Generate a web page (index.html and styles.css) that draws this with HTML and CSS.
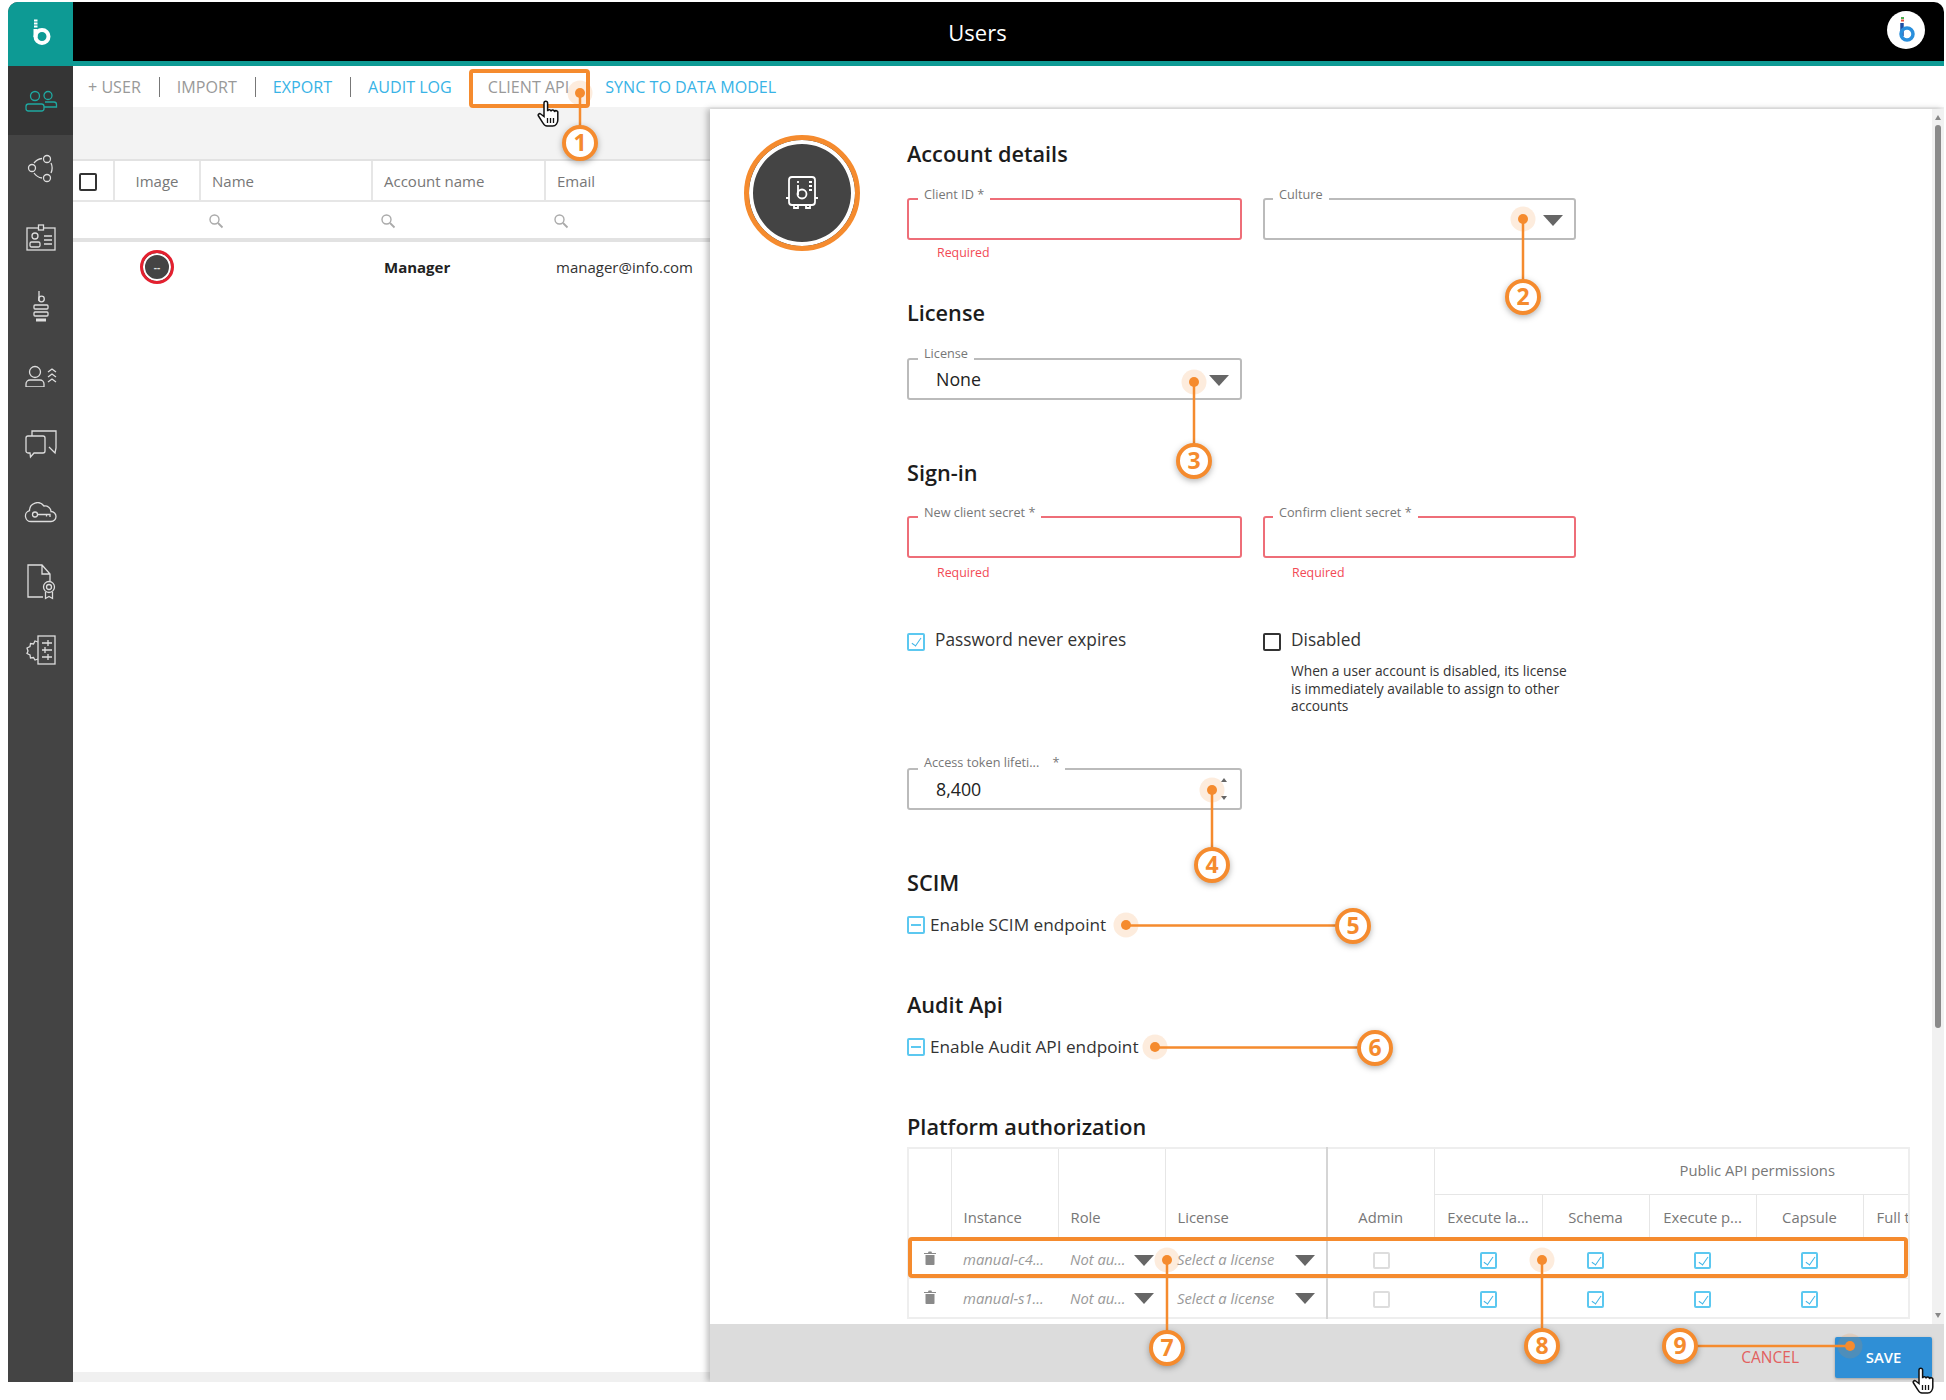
FILE: index.html
```html
<!DOCTYPE html>
<html lang="en">
<head>
  <meta charset="UTF-8" />
  <meta name="viewport" content="width=device-width, initial-scale=1" />
  <title>Users</title>
  <link rel="stylesheet" href="styles.css">
</head>
<body>

<svg class="defs" width="0" height="0">
  <symbol id="search" viewBox="0 0 16 16">
    <circle cx="6.5" cy="6.5" r="4.5" fill="none" stroke="#aaa" stroke-width="1.4"/>
    <path d="M10 10l4.5 4.5" stroke="#aaa" stroke-width="1.8"/>
  </symbol>
  <symbol id="trash" viewBox="0 0 12 14">
    <path d="M1.5 4h9v9.2a.8.8 0 0 1-.8.8H2.300a.8.8 0 0 1-.8-.8zM0 2h4l.6-1.500h2.800L8 2h4v1H0z" fill="#8a8a8a"/>
  </symbol>
  <symbol id="hand" viewBox="0 0 24 28">
    <path d="M7 3a1.800 1.800 0 0 1 3.600 0v8.200a1.700 1.700 0 0 1 3.400.3 1.700 1.700 0 0 1 3.400.5 1.700 1.700 0 0 1 3.400.8V20c0 3-2 6-5 6H10c-2 0-3-1-4-3L1.500 16c-1-1.500.8-3 2.200-2L7 16.500Z" fill="#fff" stroke="#111" stroke-width="1.500"/>
    <path d="M10.500 18v5M13.500 18v5M16.500 18v5" stroke="#111" stroke-width="1.300"/>
  </symbol>
</svg>

<div class="app">
  <nav class="sidenav">
    <div class="logo">
      <svg width="22" height="30" viewBox="0 0 22 30" fill="none" stroke="#fff">
        <path d="M4 1.500h3.500M4 4.500h3.500M4 7.500h3.500" stroke-width="2"/>
        <path d="M5.500 10v8" stroke-width="4"/>
        <circle cx="12" cy="17.500" r="6.500" stroke-width="4"/>
      </svg>
    </div>
    <a class="nav-item nav-active">
      <svg width="36" height="24" viewBox="0 -2 36 24" fill="none" stroke="#1fa8a0" stroke-width="1.500">
        <circle cx="12" cy="6" r="4.500"/><circle cx="25" cy="5.500" r="4"/>
        <rect x="3" y="14" width="18" height="7" rx="2.500"/>
        <path d="M22 12h9a2.500 2.500 0 0 1 2.500 2.500V17H21"/>
      </svg>
    </a>
    <a class="nav-item">
      <svg width="32" height="32" viewBox="0 0 32 32" fill="none" stroke="#ddd" stroke-width="1.500">
        <circle cx="22" cy="6" r="3.500"/><circle cx="7" cy="15" r="3.500"/><circle cx="22" cy="25" r="3.500"/>
        <path d="M9 10a12 12 0 0 1 8-4.500M26 10a12 12 0 0 1 0 10M9 20a12 12 0 0 0 8 5"/>
      </svg>
    </a>
    <a class="nav-item">
      <svg width="32" height="32" viewBox="0 0 32 32" fill="none" stroke="#ddd" stroke-width="1.500">
        <rect x="2" y="6" width="28" height="22"/>
        <rect x="13.500" y="3" width="5" height="5" fill="#444"/>
        <circle cx="10" cy="14" r="3"/><rect x="5" y="20" width="10" height="5" rx="1.500"/>
        <path d="M19 14h8M19 18h8M19 22h8"/>
      </svg>
    </a>
    <a class="nav-item">
      <svg width="24" height="34" viewBox="0 0 24 34" fill="none" stroke="#ddd" stroke-width="1.500">
        <path d="M10 1v10" /><circle cx="12.500" cy="9" r="2.800"/>
        <rect x="5" y="15" width="14" height="4" rx="1"/>
        <rect x="5" y="22" width="14" height="4" rx="1"/>
        <path d="M7 30h10" stroke-width="3"/>
      </svg>
    </a>
    <a class="nav-item">
      <svg width="32" height="24" viewBox="0 -2 32 24" fill="none" stroke="#ddd" stroke-width="1.500">
        <circle cx="10" cy="7" r="5.500"/>
        <path d="M1 22v-3a4 4 0 0 1 4-4h10a4 4 0 0 1 4 4v3z"/>
        <path d="M23 7l4-3 4 3M23 12l4-3 4 3M23 17l4-3 4 3"/>
      </svg>
    </a>
    <a class="nav-item">
      <svg width="32" height="30" viewBox="0 0 32 30" fill="none" stroke="#ddd" stroke-width="1.500">
        <path d="M7 7V2h24v17l-1 5-6-6"/>
        <path d="M1 9a2 2 0 0 1 2-2h15a2 2 0 0 1 2 2v13a2 2 0 0 1-2 2H9l-3.500 4-.5-4H3a2 2 0 0 1-2-2z"/>
      </svg>
    </a>
    <a class="nav-item">
      <svg width="34" height="22" viewBox="0 1.500 34 22" fill="none" stroke="#ddd" stroke-width="1.500">
        <path d="M7 21a5.500 5.500 0 0 1-1.500-10.800A8 8 0 0 1 20 5.500a6 6 0 0 1 7 5.500 5 5 0 0 1 0 10z"/>
        <circle cx="11" cy="14" r="2.500"/>
        <path d="M13.500 14H26v2.500M22.500 14v2"/>
      </svg>
    </a>
    <a class="nav-item">
      <svg width="30" height="36" viewBox="0 0 30 36" fill="none" stroke="#ddd" stroke-width="1.500">
        <path d="M17 33H2V1h14l8 9v7M16 1v9h8"/>
        <circle cx="23" cy="23" r="5.500"/><circle cx="23" cy="23" r="2.500"/>
        <path d="M19.500 28v6.500l3.500-2 3.500 2V28"/>
      </svg>
    </a>
    <a class="nav-item">
      <svg width="32" height="32" viewBox="0 0 32 32" fill="none" stroke="#ddd" stroke-width="1.500">
        <rect x="13" y="2" width="17" height="28"/>
        <path d="M13 8l-3-1-1.500 3-3-.5-.5 3-3 1.500 1 3-1 2.500 3 1.500.5 3 3-.5 1.500 2.500 3-1"/>
        <path d="M17 9h10M23 6v6M17 16h10M20 13v6M17 23h10M23 20v6"/>
      </svg>
    </a>
  </nav>

  <div class="main">
    <header class="topbar">
      <h1>Users</h1>
      <div class="user-badge">
        <svg width="20" height="26" viewBox="0 0 20 26" fill="none">
          <path d="M5 1h3" stroke="#4caf50" stroke-width="2"/>
          <path d="M5 3.500h3" stroke="#e5533d" stroke-width="2"/>
          <path d="M6 6v13" stroke="#1f4fa3" stroke-width="3.500"/>
          <circle cx="11" cy="17" r="6" stroke="#2a8fdc" stroke-width="3.500"/>
        </svg>
      </div>
    </header>

    <div class="toolbar">
      <a class="tool tool-off tool-sep">+ USER</a>
      <a class="tool tool-off tool-sep">IMPORT</a>
      <a class="tool tool-sep">EXPORT</a>
      <a class="tool">AUDIT LOG</a>
      <a class="tool tool-off tool-api">CLIENT API</a>
      <a class="tool">SYNC TO DATA MODEL</a>
    </div>

    <div class="content">
      <section class="list">
        <div class="list-band"></div>
        <table class="user-table">
          <colgroup>
            <col class="c-check"><col class="c-image"><col class="c-name"><col class="c-account"><col class="c-email">
          </colgroup>
          <tr class="head-row">
            <th><span class="cb cb-plain"></span></th>
            <th class="centered">Image</th>
            <th>Name</th>
            <th>Account name</th>
            <th>Email</th>
          </tr>
          <tr class="filter-row">
            <td></td>
            <td></td>
            <td><svg class="search" width="16" height="16"><use href="#search"/></svg></td>
            <td><svg class="search" width="16" height="16"><use href="#search"/></svg></td>
            <td><svg class="search" width="16" height="16"><use href="#search"/></svg></td>
          </tr>
          <tr class="user-row">
            <td></td>
            <td class="centered"><span class="user-pic">--</span></td>
            <td></td>
            <td class="strong">Manager</td>
            <td class="mail">manager@info.com</td>
          </tr>
        </table>
        <div class="list-fill"></div>
        <div class="list-scroll"></div>
      </section>

      <section class="panel">
        <div class="panel-body">
          <div class="avatar-col">
            <div class="avatar">
              <svg width="38" height="38" viewBox="0 0 38 38" fill="none" stroke="#fff" stroke-width="1.800">
                <rect x="6" y="3" width="26" height="28" rx="3"/>
                <path d="M3 24h3M32 24h3M11 31v3h4v-3M23 31v3h4v-3M26 8h3M26 12h3M26 16h3"/>
                <path d="M15 7v2M15 11v10"/>
                <circle cx="19" cy="20" r="4.500"/>
              </svg>
            </div>
          </div>

          <div class="form">
            <h2>Account details</h2>
            <div class="row row-first">
              <div class="field field-wide field-error">
                <label>Client ID *</label>
                <p class="error">Required</p>
              </div>
              <div class="field field-narrow">
                <label>Culture</label>
                <i class="arrow"></i>
              </div>
            </div>

            <h2 class="h-license">License</h2>
            <div class="row row-license">
              <div class="field field-wide">
                <label>License</label>
                <span class="value">None</span>
                <i class="arrow"></i>
              </div>
            </div>

            <h2 class="h-signin">Sign-in</h2>
            <div class="row row-signin">
              <div class="field field-wide field-error">
                <label>New client secret *</label>
                <p class="error">Required</p>
              </div>
              <div class="field field-narrow field-error">
                <label>Confirm client secret *</label>
                <p class="error">Required</p>
              </div>
            </div>

            <div class="options">
              <div class="option option-left">
                <span class="cb cb-on"></span>
                <span class="option-label">Password never expires</span>
              </div>
              <div class="option-right">
                <div class="option">
                  <span class="cb cb-plain"></span>
                  <span class="option-label">Disabled</span>
                </div>
                <p class="hint">When a user account is disabled, its license is immediately available to assign to other accounts</p>
              </div>
            </div>

            <div class="row row-token">
              <div class="field field-wide">
                <label>Access token lifeti... &nbsp;&nbsp; *</label>
                <span class="value">8,400</span>
                <span class="spinner"><i class="spin-up"></i><i class="spin-down"></i></span>
              </div>
            </div>

            <h2 class="h-scim">SCIM</h2>
            <div class="check-row">
              <span class="cb cb-mixed"></span>
              <span>Enable SCIM endpoint</span>
            </div>

            <h2 class="h-audit">Audit Api</h2>
            <div class="check-row">
              <span class="cb cb-mixed"></span>
              <span>Enable Audit API endpoint</span>
            </div>

            <h2 class="h-platform">Platform authorization</h2>
            <table class="auth-table">
              <colgroup>
                <col class="a-del"><col class="a-col"><col class="a-col"><col class="a-lic"><col class="a-col">
                <col class="a-first"><col class="a-col"><col class="a-col"><col class="a-col"><col class="a-end">
              </colgroup>
              <tr class="auth-top">
                <th rowspan="2"></th>
                <th rowspan="2">Instance</th>
                <th rowspan="2">Role</th>
                <th rowspan="2" class="sep-right">License</th>
                <th rowspan="2" class="centered">Admin</th>
                <th colspan="5" class="centered group">Public API permissions</th>
              </tr>
              <tr class="auth-sub">
                <th class="centered">Execute la...</th>
                <th class="centered">Schema</th>
                <th class="centered">Execute p...</th>
                <th class="centered">Capsule</th>
                <th class="clip">Full text</th>
              </tr>
              <tr class="auth-row">
                <td class="centered"><svg width="12" height="14"><use href="#trash"/></svg></td>
                <td class="muted">manual-c4...</td>
                <td><div class="pick"><span class="muted">Not au...</span><i class="arrow"></i></div></td>
                <td class="sep-right"><div class="pick"><span class="muted">Select a license</span><i class="arrow"></i></div></td>
                <td class="centered"><span class="cb cb-off"></span></td>
                <td class="centered"><span class="cb cb-on"></span></td>
                <td class="centered"><span class="cb cb-on"></span></td>
                <td class="centered"><span class="cb cb-on"></span></td>
                <td class="centered"><span class="cb cb-on"></span></td>
                <td></td>
              </tr>
              <tr class="auth-row">
                <td class="centered"><svg width="12" height="14"><use href="#trash"/></svg></td>
                <td class="muted">manual-s1...</td>
                <td><div class="pick"><span class="muted">Not au...</span><i class="arrow"></i></div></td>
                <td class="sep-right"><div class="pick"><span class="muted">Select a license</span><i class="arrow"></i></div></td>
                <td class="centered"><span class="cb cb-off"></span></td>
                <td class="centered"><span class="cb cb-on"></span></td>
                <td class="centered"><span class="cb cb-on"></span></td>
                <td class="centered"><span class="cb cb-on"></span></td>
                <td class="centered"><span class="cb cb-on"></span></td>
                <td></td>
              </tr>
            </table>
          </div>

          <div class="scrollbar">
            <i class="scroll-up"></i>
            <div class="scroll-thumb"></div>
            <i class="scroll-down"></i>
          </div>
        </div>

        <footer class="panel-foot">
          <button class="btn-cancel">CANCEL</button>
          <button class="btn-save">SAVE</button>
        </footer>
      </section>
    </div>
  </div>
</div>

<!-- callouts drawn on top of the screenshot -->
<svg class="callouts" width="1946" height="1400" viewBox="0 0 1946 1400">
  <g class="frames">
    <rect x="471" y="71" width="117" height="35" rx="2"/>
    <rect x="910" y="1239" width="996" height="37" rx="2"/>
  </g>
  <g class="halos">
    <circle cx="580" cy="93" r="12.500"/>
    <circle cx="1523" cy="219" r="12.500"/>
    <circle cx="1194" cy="382" r="12.500"/>
    <circle cx="1212" cy="790" r="12.500"/>
    <circle cx="1126" cy="925" r="12.500"/>
    <circle cx="1155" cy="1047" r="12.500"/>
    <circle cx="1167" cy="1260" r="12.500"/>
    <circle cx="1542" cy="1260" r="12.500"/>
    <circle cx="1850" cy="1346" r="12.500"/>
  </g>
  <g class="leaders">
    <path d="M580 93V143M1523 219V297M1194 382V461M1212 790V865M1126 925.500H1353M1155 1047.500H1375M1167 1260V1348M1542 1260V1346M1850 1346H1680"/>
  </g>
  <g class="dots">
    <circle cx="580" cy="93" r="5"/>
    <circle cx="1523" cy="219" r="5"/>
    <circle cx="1194" cy="382" r="5"/>
    <circle cx="1212" cy="790" r="5"/>
    <circle cx="1126" cy="925" r="5"/>
    <circle cx="1155" cy="1047" r="5"/>
    <circle cx="1167" cy="1260" r="5"/>
    <circle cx="1542" cy="1260" r="5"/>
    <circle cx="1850" cy="1346" r="5"/>
  </g>
  <g class="marks">
    <circle cx="580" cy="143" r="16"/>
    <circle cx="1523" cy="297" r="16"/>
    <circle cx="1194" cy="461" r="16"/>
    <circle cx="1212" cy="865" r="16"/>
    <circle cx="1353" cy="926" r="16"/>
    <circle cx="1375" cy="1048" r="16"/>
    <circle cx="1167" cy="1348" r="16"/>
    <circle cx="1542" cy="1346" r="16"/>
    <circle cx="1680" cy="1346" r="16"/>
  </g>
  <g class="numbers">
    <text x="580" y="151">1</text>
    <text x="1523" y="305">2</text>
    <text x="1194" y="469">3</text>
    <text x="1212" y="873">4</text>
    <text x="1353" y="934">5</text>
    <text x="1375" y="1056">6</text>
    <text x="1167" y="1356">7</text>
    <text x="1542" y="1354">8</text>
    <text x="1680" y="1354">9</text>
  </g>
  <use href="#hand" x="537" y="100" width="24" height="28"/>
  <use href="#hand" x="1912" y="1367" width="24" height="28"/>
</svg>

</body>
</html>
```

FILE: styles.css
```css
* {
  box-sizing: border-box;
}
html, body {
  margin: 0;
  padding: 0;
  background: #fff;
}
body {
  position: relative;
  width: 1946px;
  height: 1400px;
  overflow: hidden;
  font-family: "Open Sans", "Noto Sans", sans-serif;
  color: #222;
}
.defs {
  position: absolute;
}
.app {
  display: flex;
  width: 1936px;
  height: 1380px;
  margin: 2px 2px 0 8px;
  border-radius: 10px 10px 0 0;
  overflow: hidden;
}

/* left nav */
.sidenav {
  width: 65px;
  background: #444;
  flex: none;
}
.logo {
  height: 64px;
  background: #0d9a94;
  display: flex;
  align-items: center;
  justify-content: center;
}
.nav-item {
  display: flex;
  align-items: center;
  justify-content: center;
  height: 68.750px;
}
.nav-item svg {
  stroke-width: 1.300;
}
.nav-active {
  background: #353535;
}

.main {
  flex: 1;
  display: flex;
  flex-direction: column;
  min-width: 0;
}
.topbar {
  height: 64px;
  flex: none;
  background: #000;
  border-bottom: 5px solid #0d9a94;
  position: relative;
  display: flex;
  align-items: center;
  justify-content: center;
  padding-right: 62px;
}
.topbar h1 {
  margin: 0;
  font-size: 22px;
  font-weight: 400;
  color: #fff;
}
.user-badge {
  position: absolute;
  right: 19px;
  top: 9px;
  width: 38px;
  height: 38px;
  border-radius: 50%;
  background: #fff;
  display: flex;
  align-items: center;
  justify-content: center;
}

.toolbar {
  height: 41px;
  flex: none;
  background: #fff;
  display: flex;
  align-items: center;
  padding: 1px 0 0 15px;
}
.tool {
  font-size: 16.100px;
  color: #38b3e6;
  white-space: nowrap;
  margin-right: 36px;
}
.tool-off {
  color: #999;
}
.tool-sep {
  position: relative;
}
.tool-sep::after {
  content: "";
  position: absolute;
  right: -19px;
  top: 1px;
  bottom: 1px;
  width: 1px;
  background: #777;
}
.content {
  flex: 1;
  display: flex;
  min-height: 0;
  background: #f3f3f3;
}

/* user list */
.list {
  width: 637px;
  flex: none;
  display: flex;
  flex-direction: column;
  background: #fff;
}
.list-band {
  height: 54px;
  flex: none;
  background: #f3f3f3;
  border-bottom: 2px solid #e2e2e2;
}
.list-fill {
  flex: 1;
}
.list-scroll {
  height: 10px;
  flex: none;
  background: #f0f0f0;
}
.user-table {
  border-collapse: collapse;
  table-layout: fixed;
  width: 637px;
  font-size: 15px;
}
.c-check { width: 41px; }
.c-image { width: 86px; }
.c-name { width: 172px; }
.c-account { width: 173px; }
.c-email { width: 165px; }
.user-table th {
  font-weight: 400;
  color: #777;
  text-align: left;
  padding: 0 0 0 11px;
  border-right: 2px solid #e6e6e6;
  border-bottom: 2px solid #e6e6e6;
}
.user-table th:first-child {
  padding: 0 0 0 6px;
}
.user-table th:last-child {
  border-right: none;
}
.user-table .centered {
  text-align: center;
  padding: 0;
}
.head-row {
  height: 40px;
}
.filter-row {
  height: 39px;
  border-bottom: 4px solid #e2e2e2;
}
.filter-row td {
  padding: 2px 0 0 8px;
}
.search {
  display: block;
}
.user-row {
  height: 52px;
  font-size: 15px;
  color: #333;
}
.user-row td {
  padding-left: 12px;
}
.user-row .mail {
  padding-left: 11px;
}
.user-row .strong {
  font-weight: 700;
  color: #222;
}
.user-row .centered {
  padding: 0;
}
.user-pic {
  display: inline-flex;
  width: 34px;
  height: 34px;
  align-items: center;
  justify-content: center;
  border-radius: 50%;
  border: 3px solid #e3202f;
  background: #444;
  box-shadow: inset 0 0 0 2px #fff;
  color: #ddd;
  font-size: 10px;
  font-weight: 700;
  vertical-align: middle;
}

/* client panel */
.panel {
  flex: 1;
  margin-top: 2px;
  display: flex;
  flex-direction: column;
  background: #fff;
  box-shadow: -3px 0 6px rgba(0,0,0,0.25);
  position: relative;
  min-width: 0;
}
.panel-body {
  flex: 1;
  display: flex;
  min-height: 0;
  overflow: hidden;
}
.avatar-col {
  width: 197px;
  flex: none;
  padding: 26px 0 0 34px;
}
.avatar {
  width: 116px;
  height: 116px;
  border-radius: 50%;
  background: #444;
  border: 5px solid #f58b2e;
  box-shadow: inset 0 0 0 4px #fff;
  display: flex;
  align-items: center;
  justify-content: center;
}
.form {
  width: 1025px;
  flex: none;
  padding-top: 31px;
}
.form h2 {
  margin: 0;
  font-size: 21.700px;
  line-height: 28px;
  font-weight: 600;
  color: #1c1c1c;
}
.form .h-license { margin-top: 59px; }
.form .h-signin { margin-top: 59px; }
.form .h-scim { margin-top: 59px; }
.form .h-audit { margin-top: 57px; }
.form .h-platform { margin-top: 57px; }

.row {
  display: flex;
  gap: 21px;
}
.row-first { margin-top: 30px; }
.row-license { margin-top: 31px; }
.row-signin { margin-top: 29px; }
.row-token { margin-top: 53px; }

.field {
  position: relative;
  height: 42px;
  border: 2px solid #bbb;
  border-radius: 3px;
  display: flex;
  align-items: center;
}
.field-wide { width: 335px; }
.field-narrow { width: 313px; }
.field-error {
  border-color: #ee6e78;
}
.field label {
  position: absolute;
  left: 9px;
  top: -14px;
  padding: 0 6px;
  background: #fff;
  font-size: 12.700px;
  line-height: 16px;
  color: #777;
  white-space: nowrap;
}
.field-narrow label {
  left: 8px;
}
.row-license label {
  top: -15px;
}
.row-token label {
  top: -16px;
}
.value {
  margin-left: 27px;
  font-size: 17.800px;
  color: #222;
}
.error {
  position: absolute;
  left: 28px;
  top: 45px;
  margin: 0;
  font-size: 12.400px;
  line-height: 16px;
  color: #f24a55;
}
.field-narrow .error {
  left: 27px;
}
.row-signin .error {
  top: 47px;
}
.arrow {
  display: block;
  flex: none;
  width: 0;
  height: 0;
  margin: 2px 11px 0 auto;
  border-left: 10.500px solid transparent;
  border-right: 10.500px solid transparent;
  border-top: 11px solid #666;
}
.spinner {
  margin-left: auto;
  margin-right: 13px;
  display: flex;
  flex-direction: column;
  gap: 14px;
}
.spin-up, .spin-down {
  display: block;
  width: 0;
  height: 0;
  border-left: 3.500px solid transparent;
  border-right: 3.500px solid transparent;
}
.spin-up { border-bottom: 4px solid #666; }
.spin-down { border-top: 4px solid #666; }

/* checkboxes */
.cb {
  display: inline-block;
  position: relative;
  flex: none;
  width: 18px;
  height: 18px;
  border: 2px solid #333;
  border-radius: 2px;
  background: #fff;
  vertical-align: middle;
}
.cb-plain {
  border-color: #333;
}
.cb-off {
  width: 17px;
  height: 17px;
  border-color: #ddd;
}
.cb-on, .cb-mixed {
  border-color: #5cc8f0;
}
.auth-row .cb-on {
  width: 17px;
  height: 17px;
}
.cb-on::after {
  content: "";
  position: absolute;
  left: 4.500px;
  top: 1px;
  width: 4px;
  height: 9px;
  border-right: 1px solid #3fb4e6;
  border-bottom: 1px solid #3fb4e6;
  transform: rotate(35deg);
}
.cb-mixed::after {
  content: "";
  position: absolute;
  left: 2px;
  right: 2px;
  top: 6px;
  height: 2px;
  background: #5cc8f0;
}

.options {
  display: flex;
  margin-top: 75px;
  gap: 21px;
}
.option {
  display: flex;
  gap: 10px;
  align-items: flex-start;
  height: 18px;
}
.option-left {
  width: 335px;
}
.option-right {
  width: 313px;
}
.option-label {
  font-size: 17.300px;
  line-height: 14px;
  color: #333;
}
.hint {
  margin: 11px 0 0 28px;
  font-size: 13.750px;
  line-height: 17.500px;
  color: #333;
}
.check-row {
  display: flex;
  align-items: center;
  gap: 5px;
  height: 18px;
  margin-top: 19px;
  font-size: 17.200px;
  color: #333;
}

/* platform table */
.form .h-platform + .auth-table {
  margin-top: 6px;
}
.auth-table {
  border-collapse: collapse;
  table-layout: fixed;
  width: 1002px;
  font-size: 14.800px;
  border: 2px solid #eee;
}
.a-del { width: 43px; }
.a-col { width: 107px; }
.a-first { width: 108px; }
.a-lic { width: 162px; }
.a-end { width: 46px; }
.auth-table th {
  font-weight: 400;
  color: #777;
  text-align: left;
  vertical-align: bottom;
  padding: 0 0 12px 12px;
  border-right: 1px solid #e6e6e6;
  border-bottom: 1px solid #e6e6e6;
  white-space: nowrap;
}
.auth-table th.centered {
  text-align: center;
  padding-left: 0;
}
.auth-table th.group {
  vertical-align: middle;
  padding: 0 0 2px 172px;
  border-right: none;
}
.auth-table th.clip {
  overflow: hidden;
  border-right: none;
  padding-left: 13px;
}
.auth-table .sep-right {
  border-right: 2px solid #d5d5d5;
}
.auth-top {
  height: 47px;
}
.auth-sub {
  height: 45px;
}
.auth-row {
  height: 39px;
  border-bottom: 1px solid #eee;
}
.auth-row td {
  padding: 0 11px 0 12px;
  white-space: nowrap;
}
.auth-row td.centered {
  text-align: center;
  padding: 0;
}
.muted {
  font-style: italic;
  color: #999;
}
.pick {
  display: flex;
  align-items: center;
}
.pick .arrow {
  margin-right: 0;
}

/* scrollbar */
.scrollbar {
  width: 12px;
  flex: none;
  margin-left: auto;
  background: #f1f1f1;
  display: flex;
  flex-direction: column;
  align-items: center;
  padding: 6px 0;
}
.scroll-up, .scroll-down {
  display: block;
  width: 0;
  height: 0;
  flex: none;
  border-left: 3.500px solid transparent;
  border-right: 3.500px solid transparent;
}
.scroll-up { border-bottom: 5px solid #888; }
.scroll-down { border-top: 5px solid #888; margin-top: auto; }
.scroll-thumb {
  width: 6px;
  height: 903px;
  margin-top: 5px;
  background: #8a8a8a;
  border-radius: 3px;
}

.panel-foot {
  height: 58px;
  flex: none;
  background: #dcdcdc;
  display: flex;
  align-items: center;
  justify-content: flex-end;
  padding-right: 12px;
}
.btn-cancel {
  border: none;
  background: none;
  padding: 0;
  margin: 8px 36px 0 0;
  font: 400 15.500px "Open Sans", sans-serif;
  color: #e2605f;
}
.btn-save {
  width: 97px;
  height: 41px;
  margin-top: 9px;
  padding: 0 0 2px;
  border: none;
  border-radius: 2px;
  background: #2f8fd6;
  color: #fff;
  font: 600 14.800px "Open Sans", sans-serif;
  box-shadow: 0 1px 3px rgba(0,0,0,0.3);
}

/* callouts */
.callouts {
  position: absolute;
  left: 0;
  top: 0;
  pointer-events: none;
}
.frames rect {
  fill: none;
  stroke: #f58b2e;
  stroke-width: 4;
}
.halos circle {
  fill: rgba(245,139,46,0.16);
}
.leaders path {
  fill: none;
  stroke: #f58b2e;
  stroke-width: 2.500;
}
.dots circle {
  fill: #f58b2e;
}
.marks circle {
  fill: #fff;
  stroke: #f58b2e;
  stroke-width: 4;
  filter: drop-shadow(0 2px 3px rgba(0,0,0,0.3));
}
.numbers text {
  font-family: "Open Sans", sans-serif;
  font-size: 23px;
  font-weight: 700;
  fill: #f58b2e;
  text-anchor: middle;
}
```
